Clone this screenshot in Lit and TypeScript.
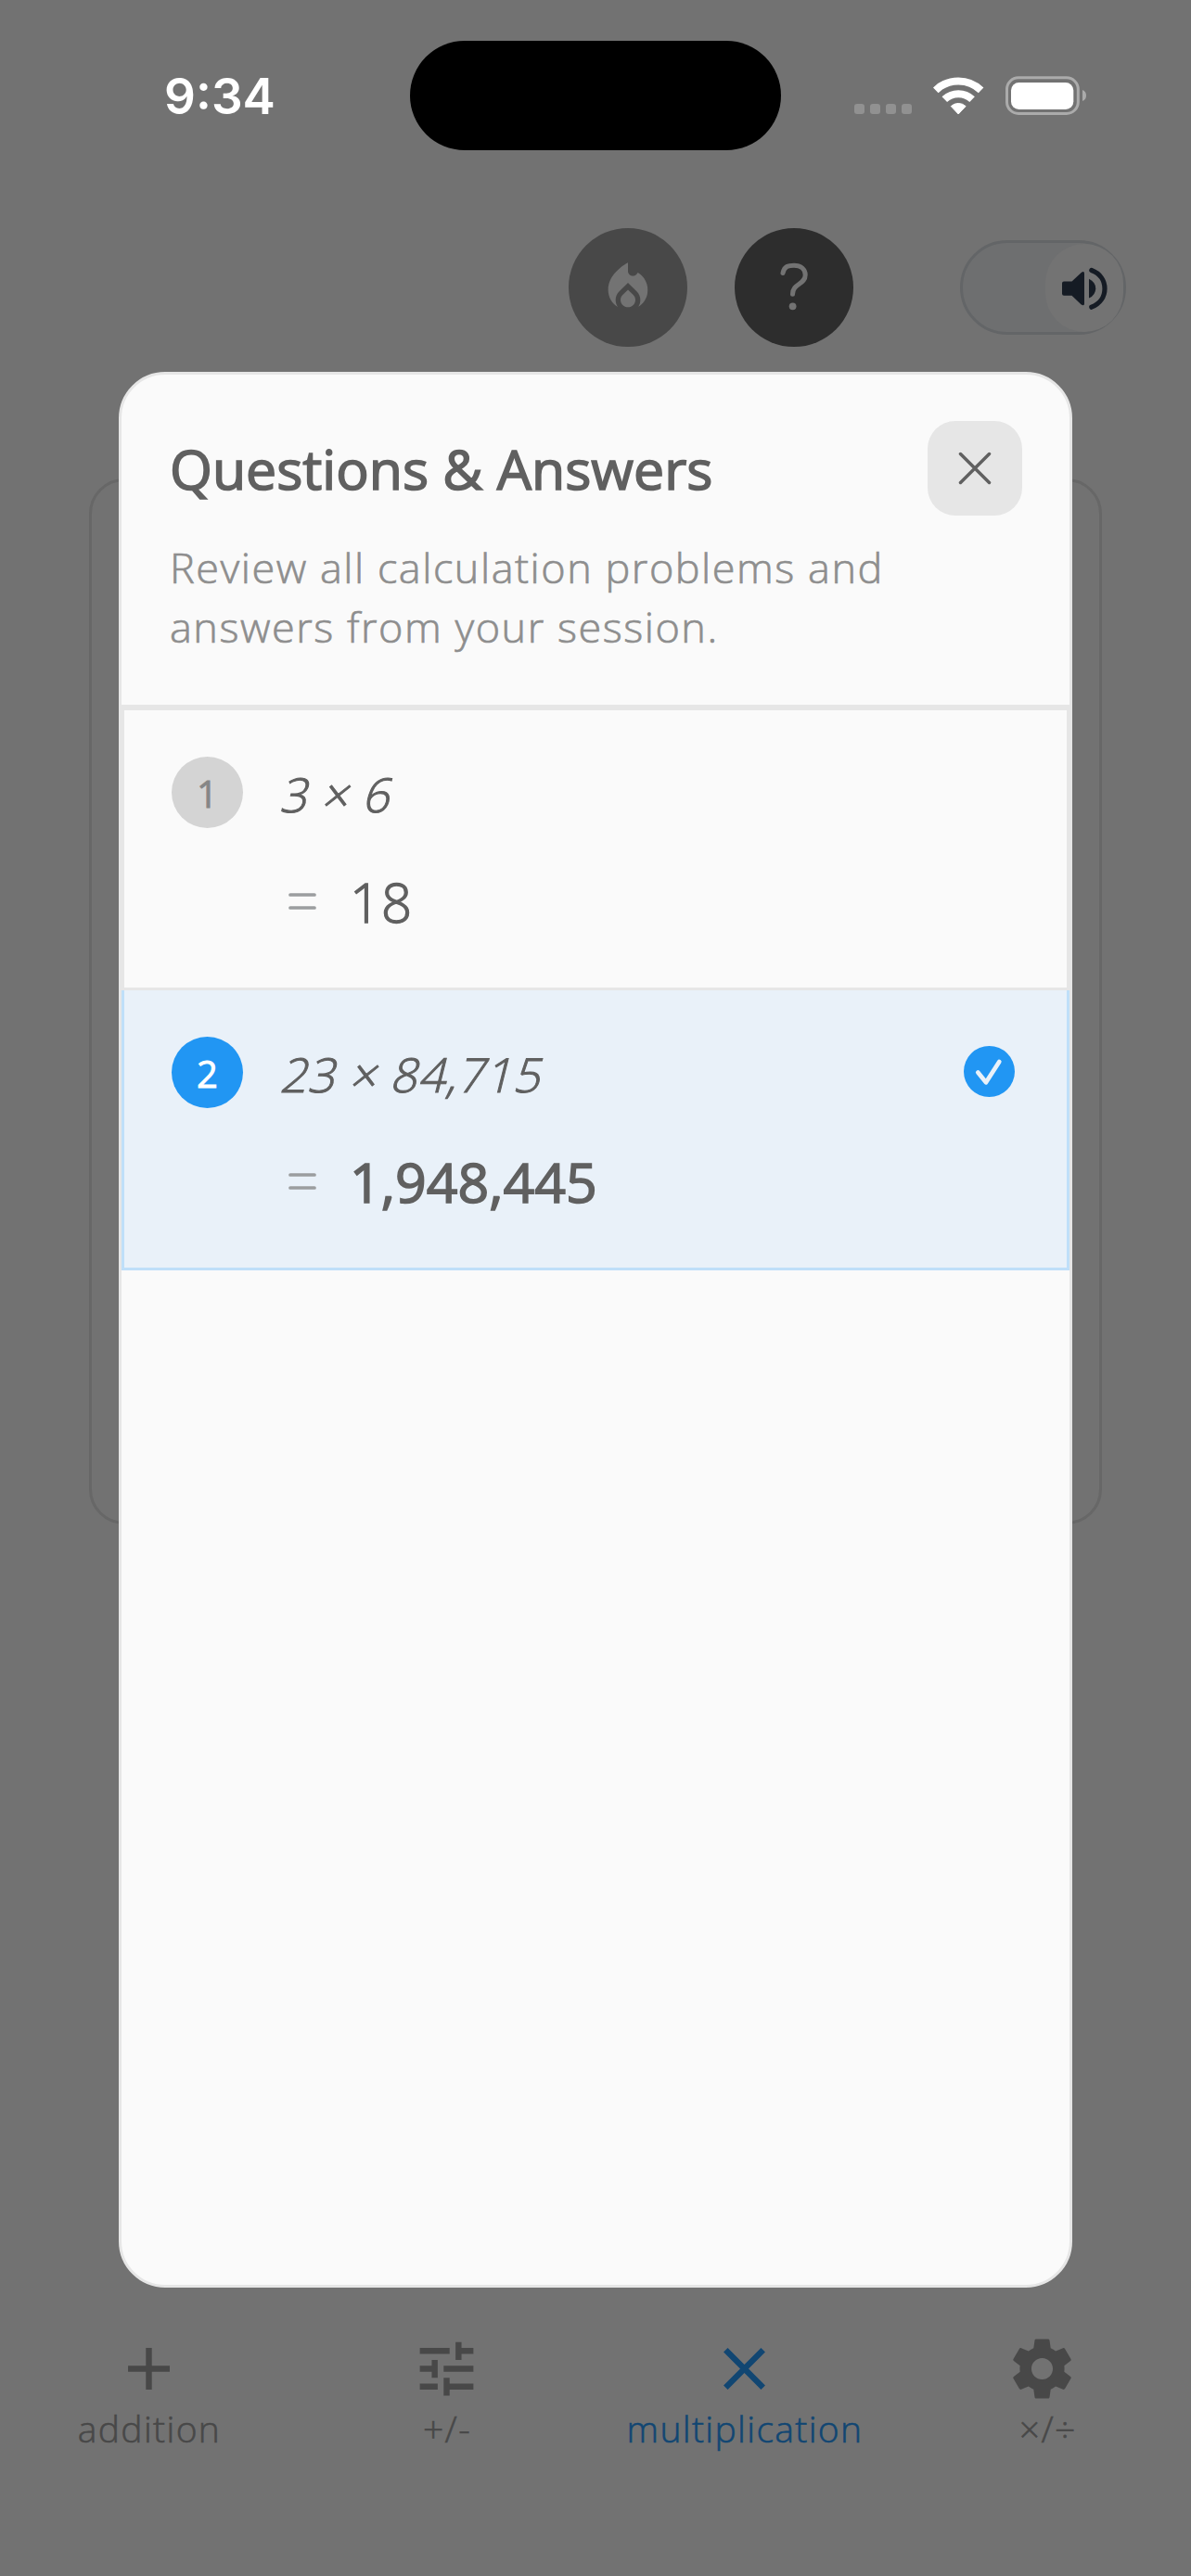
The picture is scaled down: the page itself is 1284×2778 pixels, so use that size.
import { LitElement, html, css, svg } from "lit";
import { customElement, property } from "lit/decorators.js";

interface Entry { n: number; expr: string; result: string; selected: boolean }

const ENTRIES: Entry[] = [
  { n: 1, expr: "3 × 6", result: "18", selected: false },
  { n: 2, expr: "23 × 84,715", result: "1,948,445", selected: true },
];

const ICONS = {
  fire: svg`<path d="m12 12.9-2.13 2.09C9.31 15.55 9 16.28 9 17.06 9 18.68 10.35 20 12 20s3-1.32 3-2.94c0-.78-.31-1.52-.87-2.07L12 12.9z"/><path d="m16 6-.44.55C14.38 8.02 12 7.19 12 5.3V2S4 6 4 13c0 2.92 1.56 5.47 3.89 6.86-.56-.79-.89-1.76-.89-2.8 0-1.32.52-2.56 1.47-3.5L12 10.1l3.53 3.47c.95.93 1.47 2.17 1.47 3.5 0 1.02-.31 1.96-.85 2.75 1.89-1.15 3.29-3.06 3.71-5.3.66-3.55-1.07-6.9-3.86-8.52z"/>`,
  add: svg`<path d="M19 13h-6v6h-2v-6H5v-2h6V5h2v6h6v2z"/>`,
  tune: svg`<path d="M3 17v2h6v-2H3zM3 5v2h10V5H3zm10 16v-2h8v-2h-8v-2h-2v6h2zM7 9v2H3v2h4v2h2V9H7zm14 4v-2H11v2h10zm-6-4h2V7h4V5h-4V3h-2v6z"/>`,
  times: svg`<path d="M19 6.41 17.59 5 12 10.59 6.41 5 5 6.41 10.59 12 5 17.59 6.41 19 12 13.41 17.59 19 19 17.59 13.41 12z"/>`,
  gear: svg`<path d="M19.43 12.98c.04-.32.07-.64.07-.98s-.03-.66-.07-.98l2.11-1.65c.19-.15.24-.42.12-.64l-2-3.46c-.12-.22-.39-.3-.61-.22l-2.49 1c-.52-.4-1.08-.73-1.69-.98l-.38-2.65C14.46 2.18 14.25 2 14 2h-4c-.25 0-.46.18-.49.42l-.38 2.65c-.61.25-1.17.59-1.69.98l-2.49-1c-.23-.09-.49 0-.61.22l-2 3.46c-.13.22-.07.49.12.64l2.11 1.65c-.04.32-.07.65-.07.98s.03.66.07.98l-2.11 1.65c-.19.15-.24.42-.12.64l2 3.46c.12.22.39.3.61.22l2.49-1c.52.4 1.08.73 1.69.98l.38 2.65c.03.24.24.42.49.42h4c.25 0 .46-.18.49-.42l.38-2.65c.61-.25 1.17-.59 1.69-.98l2.49 1c.23.09.49 0 .61-.22l2-3.46c.12-.22.07-.49-.12-.64l-2.11-1.65zM12 15.6c-1.98 0-3.6-1.62-3.6-3.6s1.620-3.6 3.6-3.6 3.6 1.620 3.6 3.6-1.620 3.6-3.6 3.6z"/>`,
};

@customElement("qa-row")
class QaRow extends LitElement {
  @property({ attribute: false }) entry!: Entry;
  static styles = css`
    :host { display: block; }
    .row { box-sizing: border-box; height: 305px; border: 3px solid #e6e6e6; padding: 50px 56px 0 51px; color: #606060; }
    .row.selected { height: 302px; border-color: #bfdff9; border-top: 0; background: #e9f1f9; }
    .head { display: flex; align-items: center; height: 77px; }
    .badge { width: 77px; height: 77px; border-radius: 50%; background: #d4d4d4; color: #868686; display: flex; align-items: center; justify-content: center; font-size: 40px; font-weight: 400; line-height: 77px; -webkit-text-stroke: 0.8px currentColor; }
    .badge span { margin-top: 1px; }
    .selected .badge { background: #2196f3; color: #fff; }
    .expr { flex: 1; margin: 4px 0 0 39px; font-size: 51px; line-height: 77px; font-weight: 300; -webkit-text-stroke: 1.1px currentColor; letter-spacing: 1px; white-space: nowrap; transform: skewX(-14deg); transform-origin: 0 58px; }
    .check { display: block; width: 55px; height: 55px; margin-top: -2px; }
    .answer { display: flex; align-items: center; height: 80px; margin-top: 39px; padding-left: 126px; }
    .eq { display: block; width: 30px; height: 20px; }
    .result { margin: 2px 0 0 36px; font-size: 58px; line-height: 80px; font-weight: 300; -webkit-text-stroke: 1.3px currentColor; letter-spacing: 0.8px; }
    .selected .result { margin-top: 0; font-size: 59px; font-weight: 400; -webkit-text-stroke: 1.6px currentColor; letter-spacing: 0; }
  `;
  render() {
    const e = this.entry;
    return html`<div class="row ${e.selected ? "selected" : ""}">
      <div class="head">
        <div class="badge"><span>${e.n}</span></div>
        <div class="expr">${e.expr}</div>
        ${e.selected
          ? html`<svg class="check" viewBox="0 0 55 55"><circle cx="27.5" cy="27.5" r="27.5" fill="#2196f3"/><path d="M15.3 28.5 24 39.3 38.3 17" fill="none" stroke="#e9f1f9" stroke-width="4.7" stroke-linecap="round" stroke-linejoin="round"/></svg>`
          : ""}
      </div>
      <div class="answer">
        <svg class="eq" viewBox="0 0 30 20"><path d="M2 3H28M2 17H28" stroke="#9b9d9f" stroke-width="3.7" stroke-linecap="round"/></svg>
        <div class="result">${e.result}</div>
      </div>
    </div>`;
  }
}

@customElement("app-root")
class AppRoot extends LitElement {
  static styles = css`
    :host { display: block; font-family: "Open Sans", "Noto Sans", sans-serif; }
    .screen { position: relative; width: 1284px; height: 2778px; overflow: hidden; background: #727272; display: flex; flex-direction: column; }
    .status { height: 162px; display: grid; grid-template-columns: 442px 400px 442px; box-sizing: border-box; padding-top: 44px; }
    .time { padding-left: 32px; text-align: center; color: #fff; font: 600 53px/120px Inter, sans-serif; }
    .island { height: 118px; border-radius: 59px; background: #000; }
    .signals { display: block; width: 442px; height: 118px; }
    .tools { height: 128px; margin-top: 84px; padding-right: 70px; display: flex; align-items: center; justify-content: flex-end; }
    .round { width: 128px; height: 128px; border-radius: 50%; display: flex; align-items: center; justify-content: center; background: #484848; margin-right: 51px; }
    .round svg { width: 64px; height: 64px; fill: #737373; }
    .round.help { background: #2d2d2d; margin-right: 115px; }
    .toggle { box-sizing: border-box; width: 179px; height: 102px; border: 3px solid #636567; border-radius: 51px; background: #6e6f70; display: flex; justify-content: flex-end; align-items: center; }
    .knob { width: 84px; height: 95px; border-radius: 48px; background: #737373; }
    .knob svg { display: block; width: 84px; height: 95px; }
    .card { box-sizing: border-box; height: 1128px; margin: 142px 96px 0; border: 3px solid #676767; border-radius: 38px; }
    .tabs { margin-top: auto; height: 262px; display: grid; grid-template-columns: repeat(4, 321px); }
    .tab { display: flex; flex-direction: column; align-items: center; color: #484848; font-size: 39px; font-weight: 300; -webkit-text-stroke: 0.6px currentColor; letter-spacing: 1.35px; }
    .tab svg { display: block; width: 77px; height: 77px; fill: currentColor; }
    .tab span { line-height: 54px; margin-top: -1px; padding-left: 1px; white-space: pre; }
    .tab.active { color: #114672; }
    .modal { position: absolute; left: 128px; top: 400.5px; width: 1028px; height: 2066px; box-sizing: border-box; border: 3px solid #e6e6e6; border-radius: 50px; background: #fafafa; overflow: hidden; }
    .mhead { box-sizing: border-box; height: 359.5px; border-bottom: 3px solid #e6e6e6; padding: 50.5px 51px 0 51px; }
    .top { display: flex; justify-content: space-between; align-items: center; height: 102px; }
    .title { margin: -1px 0 0 1px; font-size: 59px; font-weight: 400; -webkit-text-stroke: 1.6px currentColor; color: #606060; white-space: nowrap; }
    .close { width: 102px; height: 102px; border-radius: 30px; background: #e6e6e6; }
    .close svg { display: block; width: 102px; height: 102px; }
    .desc { margin: 24px 0 0 1px; font-size: 45px; line-height: 64px; font-weight: 300; -webkit-text-stroke: 0.7px currentColor; letter-spacing: 1.53px; color: #8e8e8e; white-space: pre; }
  `;
  render() {
    const tabs = [
      { icon: ICONS.add, label: "addition" },
      { icon: ICONS.tune, label: "+/-" },
      { icon: ICONS.times, label: "multiplication", active: true },
      { icon: ICONS.gear, label: " ×/÷" },
    ];
    return html`<div class="screen">
      <div class="status">
        <div class="time">9:34</div>
        <div class="island"></div>
        <svg class="signals" viewBox="842 44 442 118">
          <g fill="#919191"><rect x="921" y="112" width="11" height="11" rx="3"/><rect x="938" y="112" width="11" height="11" rx="3"/><rect x="955" y="112" width="11" height="11" rx="3"/><rect x="972" y="112" width="11" height="11" rx="3"/></g>
          <g fill="none" stroke="#fff" stroke-width="8"><path d="M1008.8 97.3A35 35 0 0 1 1057.6 97.3"/><path d="M1018.3 107.2A21.5 21.5 0 0 1 1048.1 107.2"/></g>
          <path fill="#fff" d="M1025.3 114.6a11.5 11.5 0 0 1 15.8 0L1033.2 123z" stroke="#fff" stroke-width="1" stroke-linejoin="round"/>
          <rect x="1085.5" y="83.8" width="76.8" height="38.6" rx="12.5" fill="none" stroke="#ababab" stroke-width="3"/>
          <rect x="1090" y="89" width="67.3" height="29" rx="8.5" fill="#fff"/>
          <path d="M1167 97a6.5 6.5 0 0 1 0 12z" fill="#ababab"/>
        </svg>
      </div>
      <div class="tools">
        <div class="round"><svg viewBox="0 0 24 24">${ICONS.fire}</svg></div>
        <div class="round help"><svg viewBox="824 278 64 64"><path d="M844 294.500C845.500 287 850 286.200 856 286.200 863 286.200 868.200 290 868.200 296.500 868.200 307 854.500 305.500 854.500 317.200" fill="none" stroke="#737373" stroke-width="5" stroke-linecap="round"/><circle cx="854.600" cy="330.300" r="3.900"/></svg></div>
        <div class="toggle"><div class="knob"><svg viewBox="1127 262 84 95"><path d="M1147 302.500h8.500l10.200-9.600q3.300-2 3.300 1v32.500q0 3-3.300 1l-10.200-9.600h-8.500q-2 0-2-2v-11.300q0-2 2-2z" fill="#151b24"/><path d="M1174 299.800q7.200 3.500 7.200 10.400t-7.200 10.400z" fill="#151b24"/><path d="M1176.800 290.500C1186 294 1191 301.500 1191 310.200S1186 326.500 1176.800 330.200" fill="none" stroke="#151b24" stroke-width="5.200" stroke-linecap="round"/></svg></div></div>
      </div>
      <div class="card"></div>
      <div class="tabs">${tabs.map((t) => html`<div class="tab ${t.active ? "active" : ""}"><svg viewBox="0 0 24 24">${t.icon}</svg><span>${t.label}</span></div>`)}</div>
      <div class="modal">
        <div class="mhead">
          <div class="top"><div class="title">Questions &amp; Answers</div><div class="close"><svg viewBox="0 0 102 102"><path d="M35.500 35.500 66.500 66.500M66.500 35.500 35.500 66.500" stroke="#606060" stroke-width="3.500" stroke-linecap="round"/></svg></div></div>
          <div class="desc">Review all calculation problems and
answers from your session.</div>
        </div>
        ${ENTRIES.map((e) => html`<qa-row .entry=${e}></qa-row>`)}
      </div>
    </div>`;
  }
}
